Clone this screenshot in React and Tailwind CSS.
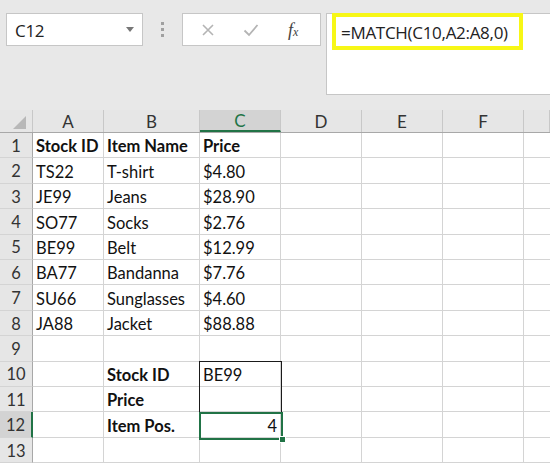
import React from 'react';

const cols = [
  { key: 'A', w: 'w-[71px]' },
  { key: 'B', w: 'w-[96px]' },
  { key: 'C', w: 'w-[81px]' },
  { key: 'D', w: 'w-[81px]' },
  { key: 'E', w: 'w-[81px]' },
  { key: 'F', w: 'w-[81px]' },
  { key: '', w: 'flex-1' },
];

const rows = [
  { a: 'Stock ID', b: 'Item Name', c: 'Price', bold: true },
  { a: 'TS22', b: 'T-shirt', c: '$4.80' },
  { a: 'JE99', b: 'Jeans', c: '$28.90' },
  { a: 'SO77', b: 'Socks', c: '$2.76' },
  { a: 'BE99', b: 'Belt', c: '$12.99' },
  { a: 'BA77', b: 'Bandanna', c: '$7.76' },
  { a: 'SU66', b: 'Sunglasses', c: '$4.60' },
  { a: 'JA88', b: 'Jacket', c: '$88.88' },
  {},
  { b: 'Stock ID', c: 'BE99', boldB: true },
  { b: 'Price', boldB: true },
  { b: 'Item Pos.', c: '4', boldB: true, right: true },
  {},
];

const App = () => {
  return (
    <div className="w-[550px] h-[463px] overflow-hidden bg-[#e8e8e8] font-['Lato',sans-serif] text-[#111]">
      {/* Formula bar area */}
      <div className="h-[110px] relative flex items-start pt-[13px] pl-[6px]">
        <div className="w-[137px] h-[33px] bg-white border border-[#c6c6c6] flex items-center pl-[8px] pr-[8px] justify-between">
          <span className="text-[17px] text-[#222] font-['Open_Sans',sans-serif] tracking-[-0.3px] pt-[2px]">C12</span>
          <span className="w-0 h-0 border-l-[4px] border-r-[4px] border-t-[5px] border-l-transparent border-r-transparent border-t-[#777]" />
        </div>
        <div className="w-[39px] h-[33px] flex flex-col items-center justify-center gap-[3px]">
          <span className="w-[3px] h-[3px] bg-[#a0a0a0]" />
          <span className="w-[3px] h-[3px] bg-[#a0a0a0]" />
          <span className="w-[3px] h-[3px] bg-[#a0a0a0]" />
        </div>
        <div className="w-[139px] h-[33px] bg-white border border-[#c6c6c6] flex items-center">
          <svg width="14" height="14" viewBox="0 0 14 14" className="ml-[18px]">
            <path d="M2 2 L12 12 M12 2 L2 12" stroke="#b4b4b4" strokeWidth="1.6" />
          </svg>
          <svg width="16" height="14" viewBox="0 0 16 14" className="ml-[28px]">
            <path d="M1.5 7.5 L6 12 L14.5 2" stroke="#b4b4b4" strokeWidth="1.8" fill="none" />
          </svg>
          <span className="ml-[29px] font-['Liberation_Serif',serif] italic text-[#444] text-[18px] leading-none">
            f<span className="text-[12px] italic">x</span>
          </span>
        </div>
        <div className="ml-[5px] flex-1 h-[82px] bg-white border border-[#c6c6c6] border-r-0 relative">
          <div className="absolute left-[5px] top-[-1px] w-[191px] h-[37px] border-[4px] border-[#f7f716]" />
          <div className="pl-[14px] pt-[6px] text-[17px] text-[#222] font-['Open_Sans',sans-serif] tracking-[-0.3px]">
            =MATCH(C10,A2:A8,0)
          </div>
        </div>
      </div>

      {/* Grid */}
      <div className="relative">
        {/* Column headers */}
        <div className="flex h-[23px] bg-[#e6e6e6] border-b border-[#a8a8a8]">
          <div className="w-[33px] relative border-r border-[#c8c8c8]">
            <svg width="13" height="13" className="absolute right-[6px] bottom-[3px]">
              <polygon points="13,0 13,13 0,13" fill="#b8b8b8" />
            </svg>
          </div>
          {cols.map((c) => (
            <div
              key={c.key || 'G'}
              className={`${c.w} flex items-center justify-center text-[17px] leading-none pt-[1px] border-r border-[#c8c8c8] ${
                c.key === 'C' ? 'bg-[#d3d3d3] text-[#217346] border-b-2 border-b-[#217346]' : 'text-[#333]'
              }`}
            >
              {c.key}
            </div>
          ))}
        </div>

        {rows.map((r, i) => {
          const n = i + 1;
          const sel = n === 12;
          return (
            <div key={n} className="flex h-[25.4px] text-[16.5px]">
              <div
                className={`w-[33px] flex items-center justify-center pt-[2px] border-b border-[#d4d4d4] text-[#333] ${
                  sel ? 'bg-[#d3d3d3] border-r-2 border-r-[#217346]' : 'bg-[#e6e6e6] border-r border-r-[#a8a8a8]'
                }`}
              >
                {n}
              </div>
              <div className={`w-[71px] bg-white border-r border-b border-[#d4d4d4] flex items-center pt-[3px] pl-[3px] whitespace-nowrap ${r.bold ? 'font-bold' : ''}`}>
                {r.a}
              </div>
              <div className={`w-[96px] bg-white border-r border-b border-[#d4d4d4] flex items-center pt-[3px] pl-[3px] whitespace-nowrap ${r.bold || r.boldB ? 'font-bold' : ''}`}>
                {r.b}
              </div>
              <div className={`w-[81px] bg-white border-r border-b border-[#d4d4d4] flex items-center pt-[3px] px-[3px] whitespace-nowrap ${r.bold ? 'font-bold' : ''} ${r.right ? 'justify-end' : ''}`}>
                {r.c}
              </div>
              <div className="w-[81px] bg-white border-r border-b border-[#d4d4d4]" />
              <div className="w-[81px] bg-white border-r border-b border-[#d4d4d4]" />
              <div className="w-[81px] bg-white border-r border-b border-[#d4d4d4]" />
              <div className="flex-1 bg-white border-b border-[#d4d4d4]" />
            </div>
          );
        })}

        {/* C10:C11 outline */}
        <div className="absolute left-[199px] top-[251px] w-[83px] h-[52px] border border-[#1a1a1a] pointer-events-none" />
        {/* C12 selection */}
        <div className="absolute left-[199px] top-[302px] w-[84px] h-[28px] border-2 border-[#217346] pointer-events-none" />
        <div className="absolute left-[279px] top-[326px] w-[7px] h-[7px] bg-[#217346] border border-white pointer-events-none" />
      </div>
    </div>
  );
};

export default App;
